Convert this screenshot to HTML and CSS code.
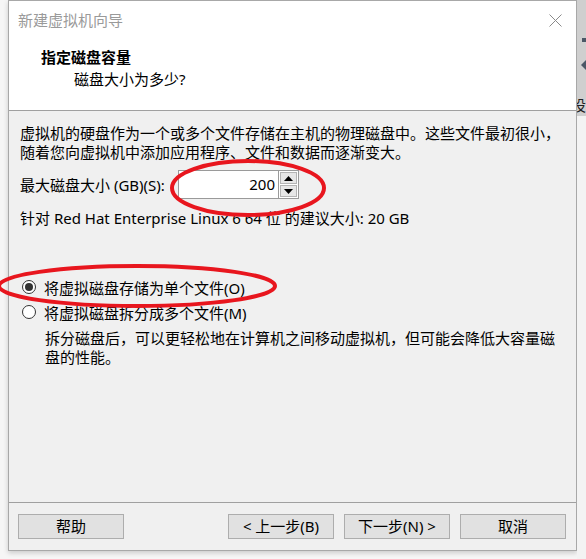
FILE: index.html
```html
<!DOCTYPE html>
<html lang="zh-CN">
<head>
<meta charset="utf-8">
<title>新建虚拟机向导</title>
<link rel="stylesheet" href="styles.css">
</head>
<body>
<div class="screen">
  <div class="gap-left"></div>
  <div class="dialog">
    <div class="header">
      <div class="titlebar">
        <span class="title">新建虚拟机向导</span>
        <svg class="close" width="13" height="13" viewBox="0 0 13 13"><path d="M0.5 0.5 L12.5 12.5 M12.5 0.5 L0.5 12.5" stroke="#8a8a8a" stroke-width="1" fill="none"/></svg>
      </div>
      <div class="heading">指定磁盘容量</div>
      <div class="subheading">磁盘大小为多少?</div>
    </div>
    <div class="content">
      <p class="intro">虚拟机的硬盘作为一个或多个文件存储在主机的物理磁盘中。这些文件最初很小，<br>随着您向虚拟机中添加应用程序、文件和数据而逐渐变大。</p>
      <div class="size-row">
        <span class="size-label">最大磁盘大小 (GB)(S):</span>
        <div class="spin">
          <div class="spin-input">200</div>
          <div class="spin-btns">
            <div class="spin-btn"><svg width="9" height="5" viewBox="0 0 9 5"><path d="M4.5 0 L9 5 L0 5 Z" fill="#000"/></svg></div>
            <div class="spin-btn"><svg width="9" height="5" viewBox="0 0 9 5"><path d="M0 0 L9 0 L4.5 5 Z" fill="#000"/></svg></div>
          </div>
        </div>
      </div>
      <p class="recommend">针对 Red Hat Enterprise Linux 6 64 位 的建议大小: 20 GB</p>
      <div class="radio-row first"><span class="radio checked"></span><span>将虚拟磁盘存储为单个文件(O)</span></div>
      <div class="radio-row"><span class="radio"></span><span>将虚拟磁盘拆分成多个文件(M)</span></div>
      <p class="desc">拆分磁盘后，可以更轻松地在计算机之间移动虚拟机，但可能会降低大容量磁<br>盘的性能。</p>
    </div>
    <div class="footer">
      <button class="btn">帮助</button>
      <div class="spacer"></div>
      <button class="btn">&lt; 上一步(B)</button>
      <button class="btn">下一步(N) &gt;</button>
      <button class="btn">取消</button>
    </div>
  </div>
  <div class="gap-right">
    <div class="bg-top">
      <span class="bg-square"></span>
      <span class="bg-tri"></span>
      <span class="bg-char">设</span>
    </div>
    <div class="bg-bottom"></div>
  </div>
  <svg class="annotations" width="586" height="559" viewBox="0 0 586 559">
    <ellipse cx="248" cy="188" rx="76" ry="27" fill="none" stroke="#e8161e" stroke-width="4"/>
    <ellipse cx="137" cy="286" rx="138" ry="20" fill="none" stroke="#e8161e" stroke-width="4"/>
  </svg>
</div>
</body>
</html>
```
FILE: styles.css
```css
* { box-sizing: border-box; }
html, body { margin: 0; padding: 0; }
body {
  background: #f6f6f6;
  font-family: "Noto Sans", "Noto Sans CJK SC", sans-serif;
  font-size: 15px;
  color: #000;
}
.screen {
  position: relative;
  display: flex;
  width: 586px;
  height: 559px;
  overflow: hidden;
}
.gap-left {
  width: 8px;
  flex: none;
}
.dialog {
  width: 569px;
  height: 551px;
  flex: none;
  display: flex;
  flex-direction: column;
  border: 1px solid #a8a8a8;
  background: #f0f0f0;
  box-shadow: 0 2px 5px rgba(0,0,0,0.18);
}
.header {
  height: 110px;
  background: #fff;
  border-bottom: 1px solid #a0a0a0;
  flex: none;
}
.titlebar {
  height: 38px;
  display: flex;
  align-items: center;
  justify-content: space-between;
  padding: 0 14px 0 9px;
}
.title {
  color: #9a9a9a;
  line-height: 20px;
}
.close { display: block; }
.heading {
  margin-top: 8px;
  padding-left: 32px;
  font-weight: bold;
  line-height: 20px;
}
.subheading {
  margin-top: 2px;
  padding-left: 65px;
  line-height: 20px;
}
.content {
  height: 392px;
  flex: none;
  border-bottom: 1px solid #a0a0a0;
  padding: 13px 0 0 11px;
}
.intro {
  margin: 0;
  line-height: 19px;
  white-space: nowrap;
}
.size-row {
  margin-top: 8px;
  display: flex;
  align-items: center;
  height: 29px;
}
.size-label {
  width: 158px;
  flex: none;
  white-space: nowrap;
}
.spin {
  display: flex;
  height: 29px;
}
.spin-input {
  width: 100px;
  height: 29px;
  background: #fff;
  border: 1px solid #9a9a9a;
  border-right: none;
  text-align: right;
  padding-right: 3px;
  line-height: 26px;
}
.spin-btns {
  width: 21px;
  display: flex;
  flex-direction: column;
  border: 1px solid #9a9a9a;
  background: #fff;
  padding: 1px;
  gap: 1px;
}
.spin-btn {
  flex: 1;
  background: #e6e6e6;
  border: 1px solid #b4b4b4;
  display: flex;
  align-items: center;
  justify-content: center;
}
.spin-btn svg { display: block; }
.recommend {
  margin: 10px 0 0;
  line-height: 19px;
}
.radio-row {
  display: flex;
  align-items: center;
  height: 22px;
  margin-top: 3px;
}
.radio-row.first { margin-top: 48px; }
.radio {
  width: 14px;
  height: 14px;
  border: 1px solid #333;
  border-radius: 50%;
  background: #fff;
  margin: 0 8px 0 2px;
  flex: none;
  display: flex;
  align-items: center;
  justify-content: center;
}
.radio.checked::after {
  content: "";
  width: 8px;
  height: 8px;
  border-radius: 50%;
  background: #333;
}
.desc {
  margin: 6px 0 0 25px;
  line-height: 19px;
  white-space: nowrap;
}
.footer {
  flex: 1;
  display: flex;
  align-items: flex-start;
  padding: 11px 10px 0 9px;
  gap: 10px;
}
.spacer { flex: 1; }
.btn {
  width: 106px;
  height: 25px;
  background: #e1e1e1;
  border: 1px solid #adadad;
  font: inherit;
  line-height: 21px;
  padding: 0;
  color: #000;
}
.gap-right {
  flex: 1;
  display: flex;
  flex-direction: column;
}
.bg-top {
  height: 116px;
  background: #cfcfcf;
  position: relative;
  overflow: hidden;
}
.bg-bottom {
  flex: 1;
  background: #f3f3f3;
}
.bg-square {
  position: absolute;
  left: 5px;
  top: 38px;
  width: 4px;
  height: 4px;
  background: #4b5766;
}
.bg-tri {
  position: absolute;
  left: 4px;
  top: 60px;
  width: 0;
  height: 0;
  border-top: 5px solid transparent;
  border-bottom: 5px solid transparent;
  border-right: 5px solid #4b5766;
}
.bg-char {
  position: absolute;
  left: -6px;
  top: 96px;
  font-size: 15px;
  line-height: 18px;
  color: #222;
}
.annotations {
  position: absolute;
  left: 0;
  top: 0;
  pointer-events: none;
}
```
